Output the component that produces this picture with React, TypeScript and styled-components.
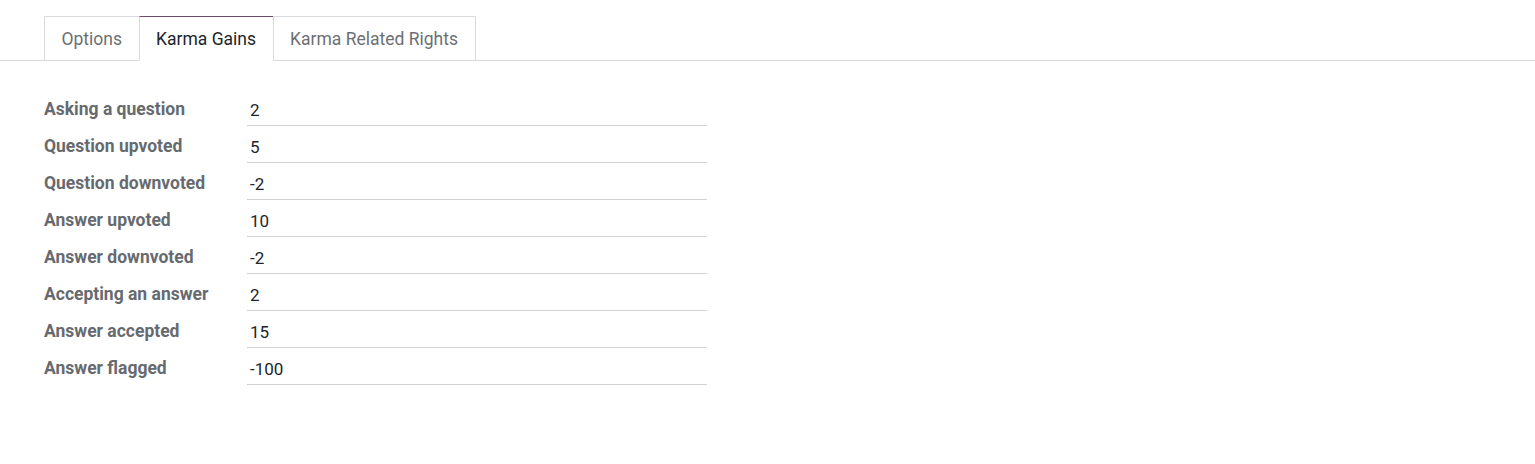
import React from "react";
import styled, { createGlobalStyle } from "styled-components";

const Global = createGlobalStyle`
  html, body { margin: 0; padding: 0; background: #fff; }
  body { font-family: Roboto, "Noto Sans", sans-serif; }
`;

const Page = styled.div`
  width: 1535px;
  height: 464px;
  background: #fff;
  padding-top: 16px;
  box-sizing: border-box;
`;

const TabBar = styled.div`
  display: flex;
  padding-left: 44px;
  border-bottom: 1px solid #d8dadd;
  height: 44px;
`;

const Tab = styled.div<{ $active?: boolean }>`
  display: flex;
  align-items: center;
  padding: 0 16.5px;
  box-sizing: border-box;
  margin-bottom: -1px;
  font-size: 17.5px;
  color: ${(p) => (p.$active ? "#212529" : "#6c6f73")};
  background: #fff;
  border: 1px solid #d8dadd;
  border-top-color: ${(p) => (p.$active ? "#714b67" : "#d8dadd")};
  border-bottom-color: ${(p) => (p.$active ? "#fff" : "#d8dadd")};
  height: 45px;
  & + & { margin-left: -1px; }
`;

const Form = styled.div`
  display: grid;
  grid-template-columns: 203px 460px;
  grid-auto-rows: 37px;
  padding: 28px 0 0 44px;
`;

const Label = styled.div`
  font-size: 17.5px;
  font-weight: 700;
  color: #666a6f;
  padding-top: 10px;
  box-sizing: border-box;
`;

const Field = styled.div`
  font-size: 17px;
  color: #212529;
  border-bottom: 1px solid #cfd1d4;
  padding: 11px 0 0 3px;
  box-sizing: border-box;
`;

const rows: [string, string][] = [
  ["Asking a question", "2"],
  ["Question upvoted", "5"],
  ["Question downvoted", "-2"],
  ["Answer upvoted", "10"],
  ["Answer downvoted", "-2"],
  ["Accepting an answer", "2"],
  ["Answer accepted", "15"],
  ["Answer flagged", "-100"],
];

export default function App() {
  return (
    <Page>
      <Global />
      <TabBar>
        <Tab>Options</Tab>
        <Tab $active>Karma Gains</Tab>
        <Tab>Karma Related Rights</Tab>
      </TabBar>
      <Form>
        {rows.map(([l, v]) => (
          <React.Fragment key={l}>
            <Label>{l}</Label>
            <Field>{v}</Field>
          </React.Fragment>
        ))}
      </Form>
    </Page>
  );
}
